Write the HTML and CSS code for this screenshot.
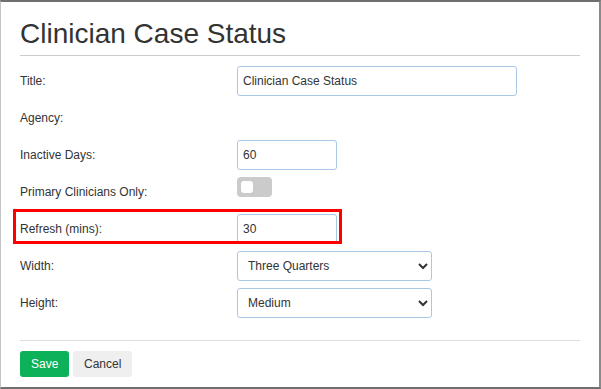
FILE: index.html
```html
<!DOCTYPE html>
<html lang="en">
<head>
    <meta charset="UTF-8">
    <meta name="viewport" content="width=device-width, initial-scale=1.0">
    <title>Clinician Case Status</title>
    <link rel="stylesheet" href="styles.css">
</head>
<body>
    <div class="widget-dialog">
        <h1>Clinician Case Status</h1>
        <hr class="head-line">
        <form class="settings-form">
            <div class="form-row">
                <label for="title">Title:</label>
                <input type="text" id="title" class="field field-wide" value="Clinician Case Status">
            </div>
            <div class="form-row">
                <label>Agency:</label>
            </div>
            <div class="form-row">
                <label for="inactive">Inactive Days:</label>
                <input type="text" id="inactive" class="field field-short" value="60">
            </div>
            <div class="form-row row-top">
                <label>Primary Clinicians Only:</label>
                <span class="toggle"><span class="toggle-knob"></span></span>
            </div>
            <div class="form-row highlight-row">
                <label for="refresh">Refresh (mins):</label>
                <input type="text" id="refresh" class="field field-short" value="30">
                <div class="highlight-box"></div> <!-- annotation -->
            </div>
            <div class="form-row">
                <label for="width">Width:</label>
                <select id="width" class="field field-select">
                    <option>Three Quarters</option>
                </select>
            </div>
            <div class="form-row">
                <label for="height">Height:</label>
                <select id="height" class="field field-select">
                    <option>Medium</option>
                </select>
            </div>
        </form>
        <hr class="foot-line">
        <div class="actions">
            <button class="btn btn-save">Save</button>
            <button class="btn btn-cancel">Cancel</button>
        </div>
    </div>
</body>
</html>
```

FILE: styles.css
```css
* {
    box-sizing: border-box;
}
html, body {
    margin: 0;
    background-color: #fff;
}
body {
    font-family: "Liberation Sans", Arial, sans-serif;
    font-size: 12px;
    color: #333;
}
.widget-dialog {
    width: 601px;
    height: 389px;
    border-top: 2px solid #6f6f6f;
    border-right: 2px solid #8a8a8a;
    border-bottom: 2px solid #6f6f6f;
    border-left: 1px solid #c4c4c4;
    padding: 16px 19px 0 19px;
}
h1 {
    margin: 0;
    font-size: 28px;
    line-height: 32px;
    font-weight: normal;
    color: #333;
}
hr {
    border: none;
    height: 1px;
    margin: 0;
}
.head-line {
    background-color: #ccc;
    margin-top: 5px;
    width: 560px;
}
.settings-form {
    display: grid;
    row-gap: 7px;
    margin-top: 10px;
}
.form-row {
    display: grid;
    grid-template-columns: 217px auto;
    justify-items: start;
    align-items: center;
    height: 30px;
}
.row-top {
    align-items: start;
}
.row-top label {
    padding-top: 8px;
}
.field {
    height: 30px;
    border: 1px solid #a9c7e6;
    border-radius: 3px;
    padding: 0 5px;
    font-family: "Liberation Sans", Arial, sans-serif;
    font-size: 12px;
    color: #333;
    background-color: #fff;
    outline: none;
}
.field-wide {
    width: 280px;
}
.field-short {
    width: 100px;
}
.field-select {
    width: 195px;
    padding: 0 6px;
}
.toggle {
    display: block;
    width: 35px;
    height: 20px;
    border-radius: 4px;
    background-color: #cbcbcb;
    padding: 4px 0 0 4px;
}
.toggle-knob {
    display: block;
    width: 12px;
    height: 12px;
    border-radius: 3px;
    background-color: #fff;
}
.highlight-row {
    position: relative;
}
.highlight-box {
    position: absolute;
    left: -7px;
    top: -5px;
    width: 329px;
    height: 35px;
    border: 3px solid #f00;
    pointer-events: none;
}
.foot-line {
    background-color: #ddd;
    margin-top: 22px;
    width: 560px;
}
.actions {
    margin-top: 10px;
    display: flex;
    gap: 4px;
}
.btn {
    height: 26px;
    padding: 0 11px;
    border: none;
    border-radius: 3px;
    font-family: "Liberation Sans", Arial, sans-serif;
    font-size: 12px;
    cursor: pointer;
}
.btn-save {
    background-color: #0db15a;
    color: #fff;
    width: 49px;
}
.btn-cancel {
    background-color: #efefef;
    color: #333;
    width: 59px;
}
```
